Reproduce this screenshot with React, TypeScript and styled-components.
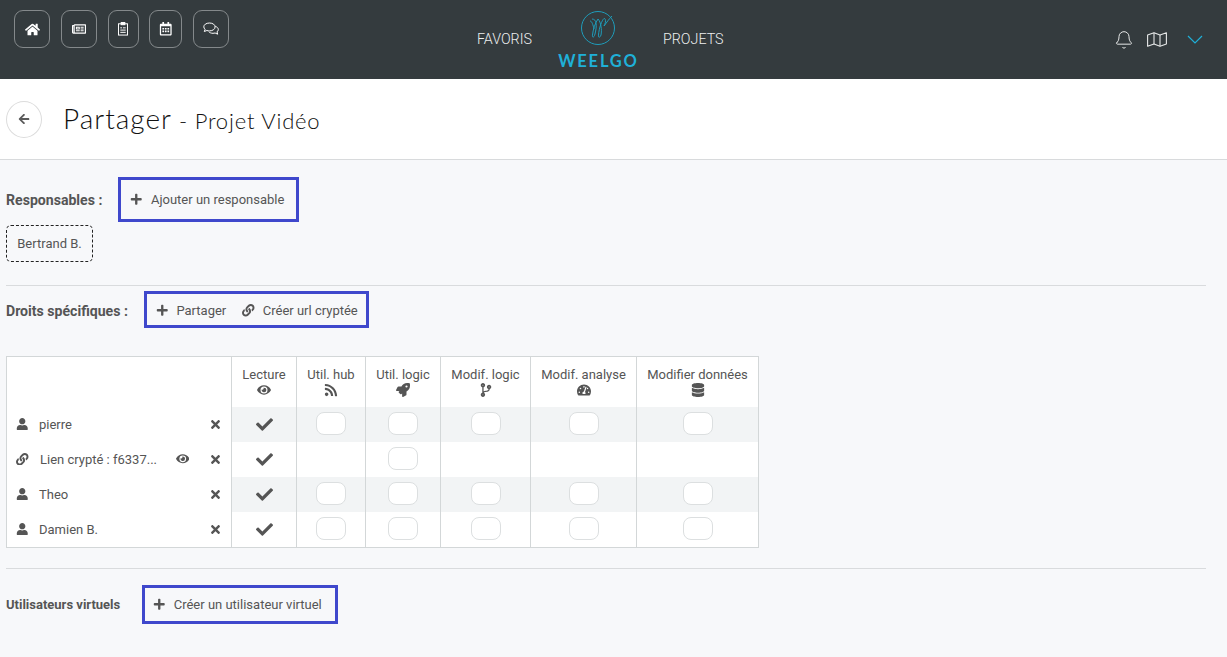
import React from "react";
import styled, { createGlobalStyle } from "styled-components";
import {
  FaHome, FaRegNewspaper, FaRegCalendarAlt, FaPlus, FaLink,
  FaEye, FaRss, FaRocket, FaCodeBranch, FaTachometerAlt, FaDatabase, FaUser, FaTimes, FaCheck,
  FaArrowLeft,
} from "react-icons/fa";
import { Bell } from "lucide-react";

const Global = createGlobalStyle`
  html, body { margin: 0; padding: 0; background: #f7f8fa; }
  body { font-family: Roboto, "Liberation Sans", sans-serif; color: #555; overflow: hidden; }
`;

const Page = styled.div`
  width: 1227px;
  height: 657px;
  overflow: hidden;
`;

const Header = styled.header`
  display: flex;
  height: 79px;
  background: #343b3e;
`;

const IconBar = styled.div`
  display: flex;
  align-items: flex-start;
  gap: 10.75px;
  width: 463px;
  padding: 10px 0 0 14px;
`;

const NavButton = styled.div<{ $w: number }>`
  display: flex;
  align-items: center;
  justify-content: center;
  width: ${(p) => p.$w}px;
  height: 38px;
  box-sizing: border-box;
  border: 1px solid #84898b;
  border-radius: 9px;
  color: #fff;
`;

const CenterNav = styled.nav`
  display: flex;
  align-items: flex-start;
  gap: 26.500px;
`;

const NavLink = styled.span`
  margin-top: 31px;
  font-size: 14.300px;
  line-height: 17px;
  font-weight: 300;
  color: #eceeef;
`;

const Logo = styled.div`
  display: flex;
  flex-direction: column;
  align-items: center;
  width: 78px;
  box-sizing: border-box;
  padding: 10px 0 0 2px;
`;

const LogoText = styled.span`
  margin-top: 6px;
  font-family: Lato, sans-serif;
  font-size: 16.500px;
  line-height: 18px;
  font-weight: 700;
  letter-spacing: 1.800px;
  color: #1fb0d8;
`;

const RightIcons = styled.div`
  display: flex;
  align-items: center;
  gap: 13px;
  margin-left: auto;
  padding: 0 24px 0 0;
  color: #e6e8e8;
`;

const ChevronWrap = styled.span`
  display: flex;
  margin-left: 7px;
`;

const TitleBar = styled.div`
  display: flex;
  align-items: center;
  height: 81px;
  box-sizing: border-box;
  padding-left: 6px;
  background: #fff;
  border-bottom: 1px solid #d8dadc;
`;

const BackButton = styled.div`
  display: flex;
  align-items: center;
  justify-content: center;
  width: 36px;
  height: 37px;
  box-sizing: border-box;
  border: 1px solid #dcdcdc;
  border-radius: 50%;
  color: #5a5a5a;
  font-size: 12px;
`;

const Title = styled.h1`
  margin: 0 0 0 21px;
  font-family: Lato, sans-serif;
  font-size: 28px;
  line-height: 36px;
  font-weight: 300;
  letter-spacing: 1px;
  color: #111;
`;

const Subtitle = styled.span`
  margin-left: 7px;
  font-size: 22px;
  font-weight: 300;
  letter-spacing: 0.800px;
`;

const Content = styled.main`
  padding: 17px 21px 0 6px;
`;

const SectionRow = styled.div<{ $gap: number }>`
  display: flex;
  align-items: center;
  gap: ${(p) => p.$gap}px;
`;

const Label = styled.span<{ $size?: number; $pt?: number }>`
  padding-top: ${(p) => p.$pt ?? 0}px;
  font-size: ${(p) => p.$size ?? 14.100}px;
  font-weight: 700;
  color: #555;
`;

const Highlight = styled.div<{ $h: number; $pl: number; $pr: number; $pt?: number }>`
  display: flex;
  align-items: center;
  height: ${(p) => p.$h}px;
  box-sizing: border-box;
  padding: ${(p) => p.$pt ?? 0}px ${(p) => p.$pr}px 0 ${(p) => p.$pl}px;
  border: 3px solid #3f48cc;
`;

const Action = styled.span<{ $ml?: number }>`
  display: inline-flex;
  align-items: center;
  gap: 8px;
  margin-left: ${(p) => p.$ml ?? 0}px;
  font-size: 13px;
  color: #555;
  white-space: nowrap;
  svg { font-size: 12.500px; color: #555; }
`;

const Chip = styled.div`
  display: flex;
  align-items: center;
  justify-content: center;
  width: 87px;
  height: 37px;
  margin-top: 3px;
  box-sizing: border-box;
  border: 1px dashed #222;
  border-radius: 5px;
  font-size: 13px;
  color: #555;
`;

const Divider = styled.hr<{ $mt: number; $mb: number }>`
  height: 1px;
  margin: ${(p) => p.$mt}px 0 ${(p) => p.$mb}px;
  border: 0;
  background: #d9dbdd;
`;

const Table = styled.table`
  width: 753px;
  margin-top: 28px;
  table-layout: fixed;
  border-collapse: collapse;
  border: 1px solid #d3d7d8;
  background: #fff;
`;

const Head = styled.th`
  height: 50px;
  padding: 10px 0 0;
  box-sizing: border-box;
  vertical-align: top;
  border-left: 1px solid #d3d7d8;
  font-size: 13px;
  line-height: 15px;
  font-weight: 400;
  color: #555;
  text-align: center;
  &:first-child { border-left: 0; }
  svg { display: block; margin: 1px auto 0; font-size: 14px; }
`;

const NameCell = styled.td`
  height: 35px;
  padding: 0;
`;

const NameInner = styled.div`
  display: flex;
  align-items: center;
  padding: 0 9px 0 9px;
  font-size: 13px;
  color: #555;
`;

const NameIcon = styled.span`
  display: flex;
  justify-content: flex-start;
  width: 13px;
  font-size: 12.500px;
  margin-right: 10px;
`;

const NameText = styled.span<{ $ml?: number }>`
  flex: 1;
  margin-left: ${(p) => p.$ml ?? 0}px;
  white-space: nowrap;
`;

const RowEye = styled.span`
  display: flex;
  margin-right: 20px;
  font-size: 13.500px;
`;

const RemoveIcon = styled.span`
  display: flex;
  font-size: 13px;
  color: #555;
`;

const Cell = styled.td<{ $striped: boolean }>`
  height: 35px;
  padding: 0;
  border-left: 1px solid #d3d7d8;
  background: ${(p) => (p.$striped ? "#f2f4f5" : "#fff")};
  text-align: center;
  vertical-align: middle;
  color: #555;
  svg { display: block; margin: 0 auto; font-size: 17px; }
`;

const Toggle = styled.div`
  width: 30px;
  height: 23px;
  margin: 0 auto 1px;
  box-sizing: border-box;
  border: 1px solid #dcdfe0;
  border-radius: 8px;
  background: #fff;
`;

const LogoMark = () => (
  <svg width="36" height="36" viewBox="0 0 36 36" fill="none" stroke="#1f9cba" strokeWidth="1">
    <circle cx="18" cy="18" r="16.500" />
    <path d="M10 11C12 11 13 15 14 19" />
    <path d="M12 9C17 9 17 16 15 24C14 28 12 28 12.500 25C13 20 15 13 18 9C21 12 22 20 21 25C20 28 18 28 18.500 25C19 18 22 10 24 8.500C26 8 26 13 24 16C27 12 29 9 32 6" />
  </svg>
);

const ClipboardIcon = () => (
  <svg width="10" height="13.500" viewBox="0 0 11 15" fill="none" stroke="#fff" strokeWidth="1.100">
    <rect x="0.500" y="2" width="10" height="12.500" />
    <rect x="3.500" y="0.500" width="4" height="2.500" fill="#fff" />
    <path d="M2.500 6.500h2M5.500 6.500h3M2.500 9h6M2.500 11.500h6" />
  </svg>
);

const CommentsIcon = () => (
  <svg width="16" height="14" viewBox="0 0 16 14" fill="none" stroke="#fff" strokeWidth="1">
    <path d="M6.500 1C3.200 1 .8 2.700.8 4.800c0 1 .5 1.800 1.300 2.500L1.300 9.500l2.600-1c.8.300 1.700.4 2.600.4 3.200 0 5.600-1.800 5.600-4S9.700 1 6.500 1z" />
    <path d="M12.300 4.300c1.800.6 3 1.800 3 3.200 0 1-.5 1.800-1.300 2.400l.7 2.300-2.600-1.200c-.7.200-1.400.3-2.100.3-1.800 0-3.300-.6-4.200-1.500" />
  </svg>
);

const FoldedMap = () => (
  <svg width="20" height="15" viewBox="0 0 20 15" fill="none" stroke="#e6e8e8" strokeWidth="1.100" strokeLinejoin="round">
    <path d="M.6 3L7 .7L13 3L19.400 .7V12L13 14.300L7 12L.6 14.300Z" />
    <path d="M7 .7V12M13 3V14.300" />
  </svg>
);

const Chevron = () => (
  <svg width="16" height="9" viewBox="0 0 16 9" fill="none" stroke="#1fb0d8" strokeWidth="1.200">
    <polyline points="1,1 8,8 15,1" />
  </svg>
);

const columns: [string, React.ReactNode, number][] = [
  ["Lecture", <FaEye />, 65],
  ["Util. hub", <FaRss />, 69],
  ["Util. logic", <FaRocket />, 75],
  ["Modif. logic", <FaCodeBranch />, 90],
  ["Modif. analyse", <FaTachometerAlt />, 106],
  ["Modifier données", <FaDatabase />, 122],
];

const users = [
  { name: "pierre", link: false },
  { name: "Lien crypté : f6337...", link: true },
  { name: "Theo", link: false },
  { name: "Damien B.", link: false },
];

export default function App() {
  return (
    <Page>
      <Global />
      <Header>
        <IconBar>
          <NavButton $w={36}><FaHome size={15} /></NavButton>
          <NavButton $w={36}><FaRegNewspaper size={14} /></NavButton>
          <NavButton $w={31}><ClipboardIcon /></NavButton>
          <NavButton $w={33}><FaRegCalendarAlt size={13.500} /></NavButton>
          <NavButton $w={36}><CommentsIcon /></NavButton>
        </IconBar>
        <CenterNav>
          <NavLink>FAVORIS</NavLink>
          <Logo>
            <LogoMark />
            <LogoText>WEELGO</LogoText>
          </Logo>
          <NavLink>PROJETS</NavLink>
        </CenterNav>
        <RightIcons>
          <Bell size={20} strokeWidth={1.200} />
          <FoldedMap />
          <ChevronWrap><Chevron /></ChevronWrap>
        </RightIcons>
      </Header>
      <TitleBar>
        <BackButton><FaArrowLeft /></BackButton>
        <Title>Partager<Subtitle>- Projet Vidéo</Subtitle></Title>
      </TitleBar>
      <Content>
        <SectionRow $gap={16}>
          <Label>Responsables :</Label>
          <Highlight $h={45} $pl={9} $pr={12}>
            <Action><FaPlus />Ajouter un responsable</Action>
          </Highlight>
        </SectionRow>
        <Chip>Bertrand B.</Chip>
        <Divider $mt={23} $mb={5} />
        <SectionRow $gap={16}>
          <Label $pt={2}>Droits spécifiques :</Label>
          <Highlight $h={37} $pl={9} $pr={8} $pt={2}>
            <Action><FaPlus />Partager</Action>
            <Action $ml={16}><FaLink />Créer url cryptée</Action>
          </Highlight>
        </SectionRow>
        <Table>
          <colgroup>
            <col width={225} />
            {columns.map(([label, , w]) => <col key={label} width={w} />)}
          </colgroup>
          <thead>
            <tr>
              <Head />
              {columns.map(([label, icon]) => <Head key={label}>{label}{icon}</Head>)}
            </tr>
          </thead>
          <tbody>
            {users.map((u, i) => (
              <tr key={u.name}>
                <NameCell>
                  <NameInner>
                    <NameIcon>{u.link ? <FaLink /> : <FaUser />}</NameIcon>
                    <NameText $ml={u.link ? 1 : 0}>{u.name}</NameText>
                    {u.link && <RowEye><FaEye /></RowEye>}
                    <RemoveIcon><FaTimes /></RemoveIcon>
                  </NameInner>
                </NameCell>
                <Cell $striped={i % 2 === 0}><FaCheck /></Cell>
                {columns.slice(1).map(([label]) => (
                  <Cell key={label} $striped={i % 2 === 0}>
                    {(!u.link || label === "Util. logic") && <Toggle />}
                  </Cell>
                ))}
              </tr>
            ))}
          </tbody>
        </Table>
        <Divider $mt={20} $mb={16} />
        <SectionRow $gap={22}>
          <Label $size={13}>Utilisateurs virtuels</Label>
          <Highlight $h={39} $pl={8} $pr={13}>
            <Action><FaPlus />Créer un utilisateur virtuel</Action>
          </Highlight>
        </SectionRow>
      </Content>
    </Page>
  );
}
